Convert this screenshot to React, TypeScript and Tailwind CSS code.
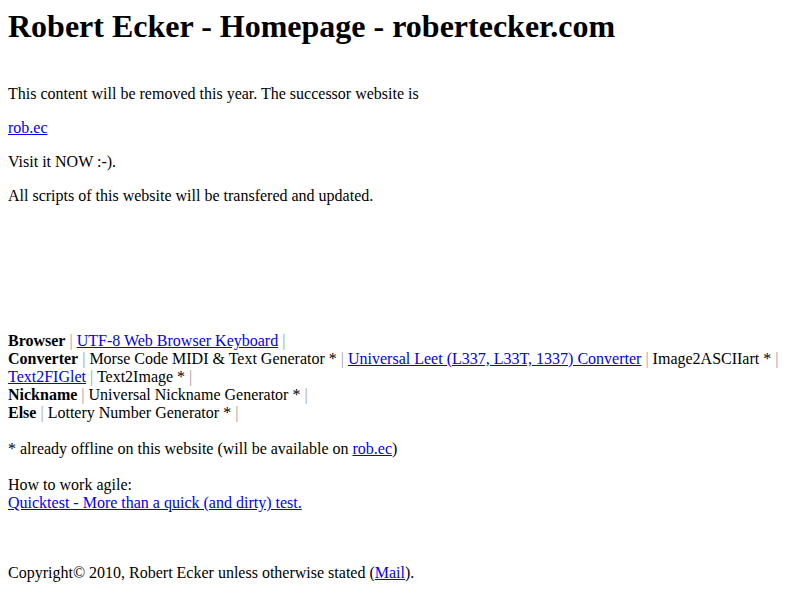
const link = "text-[#0000ee] underline";

function Pipe() {
  return <span className="text-[#a0a0a0]"> | </span>;
}

export default function App() {
  return (
    <div className="min-h-[600px] bg-white px-2 pt-[7px] font-['Liberation_Serif','Times_New_Roman',serif] text-[16px] leading-[18px] text-black">
      <h1 className="text-[32px] font-bold leading-[39px]">
        Robert Ecker - Homepage - robertecker.com
      </h1>

      <div className="mt-[39px] flex flex-col gap-4">
        <p>This content will be removed this year. The successor website is</p>
        <p>
          <a href="#" className={link}>rob.ec</a>
        </p>
        <p>Visit it NOW :-).</p>
        <p>All scripts of this website will be transfered and updated.</p>
      </div>

      <div className="mt-[127px]">
        <div>
          <b>Browser</b>
          <Pipe />
          <a href="#" className={link}>UTF-8 Web Browser Keyboard</a>
          <Pipe />
        </div>
        <div>
          <b>Converter</b>
          <Pipe />
          Morse Code MIDI &amp; Text Generator *
          <Pipe />
          <a href="#" className={link}>Universal Leet (L337, L33T, 1337) Converter</a>
          <Pipe />
          Image2ASCIIart *
          <Pipe />
          <a href="#" className={link}>Text2FIGlet</a>
          <Pipe />
          Text2Image *
          <Pipe />
        </div>
        <div>
          <b>Nickname</b>
          <Pipe />
          Universal Nickname Generator *
          <Pipe />
        </div>
        <div>
          <b>Else</b>
          <Pipe />
          Lottery Number Generator *
          <Pipe />
        </div>
      </div>

      <p className="mt-[18px]">
        * already offline on this website (will be available on{" "}
        <a href="#" className={link}>rob.ec</a>)
      </p>

      <div className="mt-[18px]">
        <div>How to work agile:</div>
        <a href="#" className={link}>Quicktest - More than a quick (and dirty) test.</a>
      </div>

      <p className="mt-[52px]">
        Copyright© 2010, Robert Ecker unless otherwise stated (
        <a href="#" className={link}>Mail</a>).
      </p>
    </div>
  );
}
